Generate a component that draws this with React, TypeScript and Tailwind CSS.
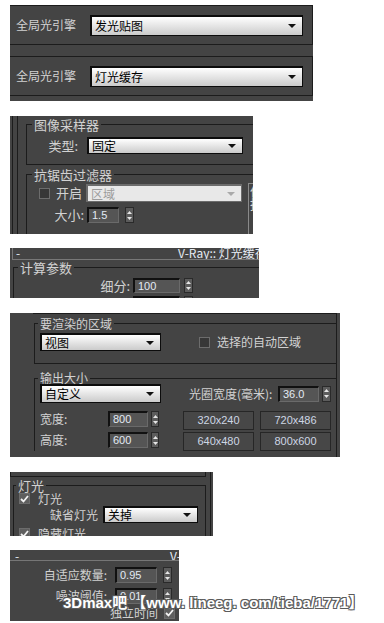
import clsx from "clsx";
import type { ReactNode } from "react";

const line = "border-[#1c1c1c]";

const Arrow = ({ color }: { color: string }) => (
  <svg width="8" height="4" viewBox="0 0 8 4">
    <path d="M0 0h8L4 4z" fill={color} />
  </svg>
);

function Drop({
  text,
  className,
  disabled = false,
}: {
  text: string;
  className?: string;
  disabled?: boolean;
}) {
  return (
    <div
      className={clsx(
        "flex shrink-0 items-center justify-between border-t-2 border-l-2 border-r border-b pl-[3px] pr-[6px]",
        disabled
          ? "border-[#6c6c6c] bg-[#e8e8e8] text-[#9c9c9c]"
          : "border-[#0c0c0c] bg-linear-to-b from-[#ffffff] to-[#cbcbcb] text-black",
        className,
      )}
    >
      <span className="text-[12px] leading-none">{text}</span>
      <Arrow color={disabled ? "#a9a9a9" : "#111111"} />
    </div>
  );
}

function Field({ value, className }: { value: string; className?: string }) {
  return (
    <div
      className={clsx(
        "flex shrink-0 items-center border-t-2 border-l-2 border-r border-b border-t-[#111] border-l-[#111] border-r-[#6a6a6a] border-b-[#6a6a6a] bg-[#555555] pl-[3px] font-['Liberation_Sans',sans-serif] text-[11px] leading-none text-[#e3eaf4]",
        className,
      )}
    >
      {value}
    </div>
  );
}

function Spin({ className }: { className?: string }) {
  return (
    <div
      className={clsx(
        "flex shrink-0 flex-col items-center justify-center gap-[3px] border border-[#2a2a2a] bg-[#5c5c5c]",
        className,
      )}
    >
      <svg width="5" height="3" viewBox="0 0 5 3">
        <path d="M0 3h5L2.5 0z" fill="#e6e6e6" />
      </svg>
      <svg width="5" height="3" viewBox="0 0 5 3">
        <path d="M0 0h5L2.5 3z" fill="#e6e6e6" />
      </svg>
    </div>
  );
}

function Check({ checked = false, className }: { checked?: boolean; className?: string }) {
  return (
    <div
      className={clsx(
        "flex h-[11px] w-[11px] shrink-0 items-center justify-center border border-[#6c6c6c]",
        checked ? "bg-[#5e5e5e]" : "bg-[#373737]",
        className,
      )}
    >
      {checked && (
        <svg width="9" height="8" viewBox="0 0 9 8">
          <path d="M1 4l2.5 2.5L8 1" stroke="#f2f2f2" strokeWidth="1.8" fill="none" />
        </svg>
      )}
    </div>
  );
}

function Btn({ text, className }: { text: string; className?: string }) {
  return (
    <div
      className={clsx(
        "flex h-[19px] w-[71px] shrink-0 items-center justify-center border border-[#262626] bg-[#474747] font-['Liberation_Sans',sans-serif] text-[11px] text-[#cdd6e4]",
        className,
      )}
    >
      {text}
    </div>
  );
}

function Group({
  title,
  className,
  legendClass,
  children,
}: {
  title: string;
  className?: string;
  legendClass?: string;
  children: ReactNode;
}) {
  return (
    <fieldset className={clsx("min-w-0", line, className)}>
      <legend className={clsx("px-[2px] text-[#d2d2d2]", legendClass)}>{title}</legend>
      {children}
    </fieldset>
  );
}

function GiRow({ text }: { text: string }) {
  return (
    <div className={clsx("flex h-[40px] items-center border-y border-r", line)}>
      <span className="w-[80px] shrink-0 pl-[6px] text-[12px] text-[#d2d2d2]">全局光引擎</span>
      <Drop text={text} className="h-[21px] w-[213px]" />
    </div>
  );
}

export default function App() {
  return (
    <div className="relative flex h-[623px] w-[384px] flex-col overflow-hidden bg-white font-['Noto_Sans_CJK_SC',sans-serif] text-[#d2d2d2]">
      {/* GI engine */}
      <div className="ml-[10px] mt-[5px] flex h-[96px] w-[303px] shrink-0 flex-col bg-[#444444]">
        <GiRow text="发光贴图" />
        <div className="h-[11px]" />
        <GiRow text="灯光缓存" />
      </div>

      {/* image sampler */}
      <div className="ml-[10px] mt-[15px] flex h-[118px] w-[243px] shrink-0 overflow-hidden bg-[#444444]">
        <div className="w-[2px] shrink-0" />
        <div className="w-px shrink-0 bg-[#1c1c1c]" />
        <div className="w-[4px] shrink-0" />
        <div className="w-px shrink-0 bg-[#1c1c1c]" />
        <div className="w-[8px] shrink-0" />
        <div className="flex min-w-0 flex-1 flex-col pt-[2px]">
          <Group
            title="图像采样器"
            className="border-y border-l pb-[10px] pt-[6px]"
            legendClass="ml-[5px] text-[13px] leading-[13px]"
          >
            <div className="flex h-[17px] items-center">
              <span className="w-[51px] shrink-0 text-right text-[13px]">类型:</span>
              <Drop text="固定" className="ml-[9px] h-[17px] w-[156px]" />
            </div>
          </Group>
          <Group
            title="抗锯齿过滤器"
            className="mt-[3px] border-l border-t"
            legendClass="ml-[5px] text-[13px] leading-[13px]"
          >
            <div className="flex pt-[3px]">
              <div className="flex w-[221px] shrink-0 flex-col">
                <div className="flex h-[18px] items-center pl-[12px]">
                  <Check />
                  <span className="ml-[6px] w-[30px] shrink-0 text-[13px]">开启</span>
                  <Drop text="区域" disabled className="h-[18px] w-[156px]" />
                </div>
                <div className="mt-[5px] flex h-[16px] items-center">
                  <span className="w-[57px] shrink-0 text-right text-[13px]">大小:</span>
                  <Field value="1.5" className="ml-[3px] h-[16px] w-[32px]" />
                  <Spin className="ml-[6px] h-[16px] w-[9px]" />
                </div>
              </div>
              <div className="-mt-[1px] h-[60px] w-[6px] shrink-0 overflow-hidden border-l border-t border-[#8a8a8a] pl-px text-[13px] leading-[13px] text-[#d8d8d8]">
                倍<br />描
              </div>
            </div>
          </Group>
        </div>
      </div>

      {/* light cache */}
      <div className="ml-[10px] mt-[14px] flex h-[50px] w-[249px] shrink-0 flex-col overflow-hidden bg-[#444444]">
        <div className="ml-[2px] flex h-[12px] shrink-0 items-end overflow-hidden whitespace-nowrap border-b border-l border-[#787878] text-[12px] leading-[12px] text-[#e6ecf4]">
          <span className="w-[165px] shrink-0 pl-[3px]">-</span>
          <span className="shrink-0">V-Ray:: 灯光缓存</span>
        </div>
        <Group
          title="计算参数"
          className="ml-[3px] mt-[1px] border-l border-t"
          legendClass="ml-[4px] text-[13px] leading-[13px]"
        >
          <div className="flex h-[15px] items-center mt-[4px]">
            <span className="w-[116px] shrink-0 text-right text-[13px]">细分:</span>
            <Field value="100" className="ml-[3px] h-[15px] w-[47px]" />
            <Spin className="ml-[4px] h-[15px] w-[9px]" />
          </div>
          <div className="mt-[3px] flex h-[15px] items-center">
            <span className="w-[116px] shrink-0 text-right text-[13px]">采样大小:</span>
            <Field value="0.02" className="ml-[3px] h-[15px] w-[47px]" />
            <Spin className="ml-[4px] h-[15px] w-[9px]" />
          </div>
        </Group>
      </div>

      {/* render region / output size */}
      <div className="ml-[10px] mt-[15px] h-[144px] w-[330px] shrink-0 overflow-hidden bg-[#444444]">
        <div className={clsx("ml-[23px] flex h-full w-[304px] flex-col border-r border-t pl-px", line)}>
          <Group
            title="要渲染的区域"
            className="mt-[3px] border-y border-l pb-[12px] pt-[3px]"
            legendClass="ml-[3px] text-[12px] leading-[13px]"
          >
            <div className="flex h-[18px] items-center pl-[5px]">
              <Drop text="视图" className="h-[18px] w-[121px]" />
              <Check className="ml-[38px]" />
              <span className="ml-[7px] text-[12px]">选择的自动区域</span>
            </div>
          </Group>
          <Group
            title="输出大小"
            className="mt-[8px] border-l border-t"
            legendClass="ml-[3px] text-[12px] leading-[12px]"
          >
            <div className="flex h-[19px] items-center pl-[5px]">
              <Drop text="自定义" className="h-[19px] w-[121px]" />
              <span className="ml-[28px] w-[89px] shrink-0 whitespace-nowrap text-[12px]">光圈宽度(毫米):</span>
              <Field value="36.0" className="h-[16px] w-[41px]" />
              <Spin className="ml-[3px] h-[16px] w-[9px]" />
            </div>
            <div className="mt-[8px] flex h-[19px] items-start pl-[5px]">
              <span className="w-[68px] shrink-0 text-[12px] leading-[16px]">宽度:</span>
              <Field value="800" className="h-[16px] w-[40px]" />
              <Spin className="ml-[3px] h-[16px] w-[8px]" />
              <Btn text="320x240" className="ml-[24px]" />
              <Btn text="720x486" className="ml-[6px]" />
            </div>
            <div className="mt-[2px] flex h-[19px] items-start pl-[5px]">
              <span className="w-[68px] shrink-0 text-[12px] leading-[16px]">高度:</span>
              <Field value="600" className="h-[16px] w-[40px]" />
              <Spin className="ml-[3px] h-[16px] w-[8px]" />
              <Btn text="640x480" className="ml-[24px]" />
              <Btn text="800x600" className="ml-[6px]" />
            </div>
          </Group>
        </div>
      </div>

      {/* lights */}
      <div className="ml-[10px] mt-[15px] flex h-[64px] w-[203px] shrink-0 overflow-hidden bg-[#444444]">
        <div className="flex w-[200px] shrink-0 flex-col">
          <div className={clsx("h-[5px] w-[196px] shrink-0 border-x border-b", line)} />
          <Group
            title="灯光"
            className="ml-[3px] mt-[2px] w-[193px] border-x border-t"
            legendClass="ml-[2px] px-[1px] text-[13px] leading-[13px]"
          >
            <div className="mt-[1px] flex h-[11px] items-center pl-[5px]">
              <Check checked />
              <span className="ml-[8px] text-[12px] leading-[11px]">灯光</span>
            </div>
            <div className="mt-[2px] flex h-[17px] items-center">
              <span className="w-[84px] shrink-0 text-right text-[12px]">缺省灯光</span>
              <Drop text="关掉" className="ml-[5px] h-[17px] w-[95px]" />
            </div>
            <div className="mt-[5px] flex h-[11px] items-center pl-[5px]">
              <Check checked />
              <span className="ml-[8px] text-[12px] leading-[11px]">隐藏灯光</span>
            </div>
          </Group>
        </div>
        <div className="w-px shrink-0 bg-[#1c1c1c]" />
      </div>

      {/* adaptive DMC */}
      <div className="ml-[10px] mt-[14px] flex h-[71px] w-[169px] shrink-0 flex-col overflow-hidden bg-[#444444]">
        <div className="flex h-[11px] shrink-0 items-center overflow-hidden whitespace-nowrap border-b border-[#767676] text-[12px] leading-[11px] text-[#e6ecf4]">
          <span className="w-[160px] shrink-0 pl-[5px]">-</span>
          <span className="shrink-0">V-Ray:: 自适应DMC</span>
        </div>
        <div className="mt-[6px] flex h-[16px] shrink-0 items-center">
          <span className="w-[97px] shrink-0 text-right text-[12px]">自适应数量:</span>
          <Field value="0.95" className="ml-[8px] h-[16px] w-[42px]" />
          <Spin className="ml-[6px] h-[16px] w-[9px]" />
        </div>
        <div className="mt-[5px] flex h-[16px] shrink-0 items-center">
          <span className="w-[97px] shrink-0 text-right text-[12px]">噪波阈值:</span>
          <Field value="0.01" className="ml-[8px] h-[16px] w-[42px]" />
          <Spin className="ml-[6px] h-[16px] w-[9px]" />
        </div>
        <div className="mt-[2px] flex h-[14px] shrink-0 items-center pl-[100px]">
          <span className="text-[12px]">独立时间</span>
          <Check checked className="ml-[6px]" />
        </div>
      </div>

      {/* watermark */}
      <div className="absolute left-[63px] top-[595px] whitespace-nowrap font-['Liberation_Sans','Noto_Sans_CJK_SC',sans-serif] text-[15px] font-bold leading-[16px] text-white [text-shadow:1px_1px_0_#5a5a5a,-1px_-1px_0_#5a5a5a,1px_-1px_0_#5a5a5a,-1px_1px_0_#5a5a5a]">
        3Dmax吧 【www. lineeg. com/tieba/1771】
      </div>
    </div>
  );
}
